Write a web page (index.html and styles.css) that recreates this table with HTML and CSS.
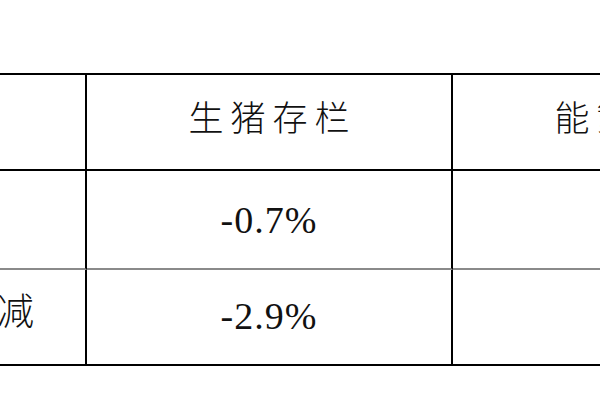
FILE: index.html
```html
<!DOCTYPE html>
<html lang="zh">
<head>
<meta charset="utf-8">
<title>生猪存栏</title>
<link rel="stylesheet" href="styles.css">
</head>
<body>
<div class="sheet">
  <div class="grid">
    <div class="cell label row1"></div>
    <div class="cell head row1">生猪存栏</div>
    <div class="cell head row1">能繁母猪</div>

    <div class="cell label row2"></div>
    <div class="cell num row2">-0.7%</div>
    <div class="cell num row2"></div>

    <div class="cell label row3">增减</div>
    <div class="cell num row3">-2.9%</div>
    <div class="cell num row3"></div>
  </div>
</div>
</body>
</html>
```

FILE: styles.css
```css
html, body {
  margin: 0;
  padding: 0;
  background: #ffffff;
  overflow: hidden;
  width: 600px;
  height: 400px;
}

.sheet {
  padding-top: 73px;
  margin-left: -181px;
  width: 1100px;
}

.grid {
  display: grid;
  grid-template-columns: 268px 366px 366px;
  grid-template-rows: 96px 99px 96px;
  border-top: 2px solid #000;
  width: 1000px;
}

.cell {
  box-sizing: border-box;
  border-right: 2px solid #000;
  display: flex;
  align-items: center;
  justify-content: center;
  color: #111;
}

.row1 { border-bottom: 2px solid #000; }
.row2 { border-bottom: 2px solid #8a8a8a; }
.row3 { border-bottom: 2px solid #000; }

.head,
.label {
  font-family: "Noto Sans CJK SC", "Noto Sans CJK JP", sans-serif;
  font-weight: 300;
  font-size: 35px;
  letter-spacing: 7px;
  padding-bottom: 14px;
  padding-left: 7px;
}

.label {
  font-size: 37px;
  justify-content: flex-end;
  padding-right: 44px;
  padding-bottom: 16px;
}

.num {
  font-family: "Liberation Serif", "Times New Roman", serif;
  font-size: 38px;
  letter-spacing: 1px;
}

.row3.num {
  padding-bottom: 2px;
}
```
